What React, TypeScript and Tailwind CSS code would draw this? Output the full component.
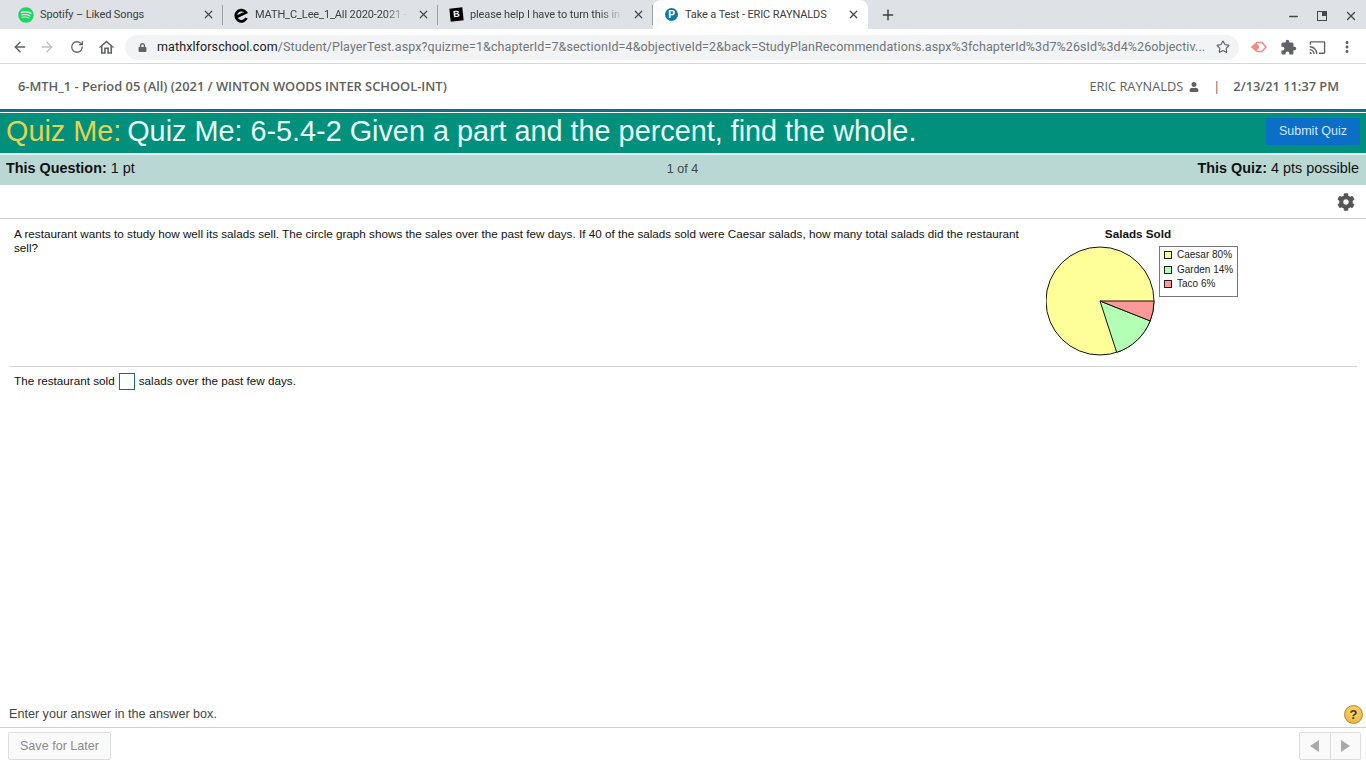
import { ArrowLeft, ArrowRight, Minus, Plus, RotateCw, Star, X } from "lucide-react";
import { FaCog, FaLock, FaSpotify, FaUser } from "react-icons/fa";
import { MdCast, MdExtension, MdMoreVert, MdOutlineHome } from "react-icons/md";

const sans = "font-['Liberation_Sans',Arial,sans-serif]";
const roboto = "font-['Roboto',sans-serif]";
const open = "font-['Open_Sans',sans-serif]";

function Tab({ icon, title, fade }: { icon: React.ReactNode; title: string; fade?: boolean }) {
  return (
    <div className="flex h-[29px] w-[215px] shrink-0 items-center pl-[10px]">
      <div className="flex w-4 h-4 shrink-0 items-center justify-center">{icon}</div>
      <div className={`ml-[6px] flex-1 overflow-hidden whitespace-nowrap pt-[2px] text-[11px] tracking-[-0.12px] text-[#3c4043] ${roboto} ${fade ? "[mask-image:linear-gradient(90deg,black_82%,transparent_97%)]" : ""}`}>
        {title}
      </div>
      <X size={13} strokeWidth={2.2} className="ml-1 text-[#45484c]" />
      <div className="ml-[7px] h-[20px] w-px bg-[#9aa0a6]" />
    </div>
  );
}

function BrowserChrome() {
  return (
    <div className={`shrink-0 ${roboto}`}>
      <div className="flex h-[29px] items-end bg-[#dee1e6] pl-2">
        <Tab icon={<FaSpotify size={16} className="text-[#1ed760]" />} title="Spotify – Liked Songs" />
        <Tab
          icon={
            <svg width="16" height="16" viewBox="0 0 16 16">
              <path d="M3.5 10 L13 5.5 A5.6 5.6 0 1 0 13.5 11" fill="none" stroke="#000" strokeWidth="2.8" />
            </svg>
          }
          title="MATH_C_Lee_1_All 2020-2021 -"
          fade
        />
        <Tab
          icon={<span className={`flex h-[13px] w-[13px] -rotate-6 items-center justify-center bg-black text-[9px] font-bold text-white ${sans}`}>B</span>}
          title="please help I have to turn this in"
          fade
        />
        <div className="flex h-[29px] w-[215px] shrink-0 items-center rounded-t-lg bg-white pl-[12px] pr-[8px]">
          <span className={`flex h-[13px] w-[13px] items-center justify-center rounded-full bg-[#0a7da5] text-[10px] font-bold text-white ${sans}`}>P</span>
          <div className="ml-[7px] flex-1 whitespace-nowrap pt-[2px] text-[11px] tracking-[-0.12px] text-[#3c4043]">Take a Test - ERIC RAYNALDS</div>
          <X size={13} strokeWidth={2.2} className="text-[#45484c]" />
        </div>
        <div className="flex h-[29px] w-[40px] items-center justify-center">
          <Plus size={16} strokeWidth={2.2} className="text-[#3c4043]" />
        </div>
        <div className="ml-auto flex h-[29px] items-center gap-[17px] pr-[8px] pt-[3px] text-[#45484c]">
          <Minus size={13} strokeWidth={2.4} />
          <span className="relative h-[10px] w-[10px] border-[1.5px] border-[#45484c] bg-[#dee1e6] after:absolute after:-right-[1px] after:-top-[1px] after:h-[5px] after:w-[5px] after:bg-[#45484c]" />
          <X size={14} strokeWidth={2.4} />
        </div>
      </div>
      <div className="flex h-[35px] items-center border-b border-[#d6d7da] bg-white pl-[12px] pt-[2px]">
        <ArrowLeft size={16} strokeWidth={2.2} className="text-[#5f6368]" />
        <ArrowRight size={16} strokeWidth={2.2} className="ml-[11px] text-[#bdc1c6]" />
        <RotateCw size={14} strokeWidth={2.2} className="ml-[15px] text-[#5f6368]" />
        <MdOutlineHome size={19} className="ml-[13px] text-[#5f6368]" />
        <div className="ml-[9px] flex h-[25px] w-[1114px] items-center rounded-full bg-[#f1f3f4] pl-[13px]">
          <FaLock size={9} className="text-[#5f6368]" />
          <div className="ml-[10px] w-[1052px] overflow-hidden whitespace-nowrap text-[12.5px] tracking-[0.1px] text-[#70757a]">
            <span className="text-[#202124]">mathxlforschool.com</span>
            /Student/PlayerTest.aspx?quizme=1&amp;chapterId=7&amp;sectionId=4&amp;objectiveId=2&amp;back=StudyPlanRecommendations.aspx%3fchapterId%3d7%26sId%3d4%26objectiv...
          </div>
          <Star size={14} strokeWidth={2} className="ml-[7px] text-[#5f6368]" />
        </div>
        <svg width="16" height="16" viewBox="0 0 16 16" className="ml-[12px]">
          <path d="M1 8 L6 3.5 L11 3.5 L15 8 L11 12.5 L6 12.5 Z" fill="none" stroke="#f28b82" strokeWidth="1.6" />
          <circle cx="5" cy="8" r="3" fill="#f28b82" />
        </svg>
        <MdExtension size={17} className="ml-[13px] text-[#5f6368]" />
        <MdCast size={17} className="ml-[12px] text-[#5f6368]" />
        <MdMoreVert size={18} className="ml-[12px] text-[#5f6368]" />
      </div>
    </div>
  );
}

function PieChart() {
  return (
    <svg width="110" height="110" viewBox="1 0 110 110" className="shrink-0">
      <circle cx="55" cy="55" r="54" fill="#ffff99" stroke="#111" strokeWidth="1" />
      <path d="M55 55 L105.2 74.9 A54 54 0 0 1 71.7 106.4 Z" fill="#b3ffb3" stroke="#111" strokeWidth="1" />
      <path d="M55 55 L109 55 A54 54 0 0 1 105.2 74.9 Z" fill="#ff9999" stroke="#111" strokeWidth="1" />
    </svg>
  );
}

function LegendRow({ color, label }: { color: string; label: string }) {
  return (
    <div className="flex h-[14.5px] items-center gap-[5px]">
      <span className="h-2 w-2 border border-[#222]" style={{ backgroundColor: color }} />
      <span>{label}</span>
    </div>
  );
}

function Chart() {
  return (
    <div className={`w-[192px] shrink-0 ${sans}`}>
      <div className="w-[184px] text-center text-[11.7px] leading-[14px] font-bold text-[#111]">Salads Sold</div>
      <div className="mt-[5px] flex items-start gap-[3px]">
        <PieChart />
        <div className="h-[51px] w-[79px] border border-[#777] pl-[4px] pt-[1px] text-[10px] text-[#222]">
          <LegendRow color="#ffff99" label="Caesar 80%" />
          <LegendRow color="#b3ffb3" label="Garden 14%" />
          <LegendRow color="#ff9999" label="Taco 6%" />
        </div>
      </div>
    </div>
  );
}

export default function App() {
  return (
    <div className="flex h-[768px] w-[1366px] flex-col overflow-hidden bg-white">
      <BrowserChrome />

      <div className={`flex h-[45px] shrink-0 items-center justify-between pl-[18px] pr-[27px] pt-[1px] text-[12.8px] text-[#606060] ${open}`}>
        <div className="text-[12.86px] font-semibold">6-MTH_1 - Period 05 (All) (2021 / WINTON WOODS INTER SCHOOL-INT)</div>
        <div className="flex items-center">
          <span>ERIC RAYNALDS</span>
          <FaUser size={10} className="ml-[6px]" />
          <span className="ml-[14px]">|</span>
          <span className="ml-[13px] font-semibold">2/13/21 11:37 PM</span>
        </div>
      </div>

      <div className={`shrink-0 ${sans}`}>
        <div className="h-[3px] bg-[#10708a]" />
        <div className="flex h-[41px] items-center justify-between border-t border-white bg-[#00907c] pb-[2px] pl-[6px] pr-[6px] text-[28.8px]">
          <div className="whitespace-nowrap">
            <span className="text-[#e5d34e]">Quiz Me:</span>
            <span className="ml-[6px] text-[#e8fbf8]">Quiz Me: 6-5.4-2 Given a part and the percent, find the whole.</span>
          </div>
          <button className="mb-[2px] h-[27px] w-[94px] rounded-[2px] bg-[#0b6fc7] text-[12.5px] text-[#cfe6fb]">Submit Quiz</button>
        </div>
        <div className="grid h-[32px] grid-cols-3 items-center border-t-2 border-[#e4eeec] bg-[#b9d8d4] pb-[2px] pl-[6px] pr-[7px] text-[14.4px] text-[#111]">
          <div>
            <b>This Question:</b> 1 pt
          </div>
          <div className="text-center text-[12.5px] text-[#444]">1 of 4</div>
          <div className="text-right">
            <b>This Quiz:</b> 4 pts possible
          </div>
        </div>
      </div>

      <div className="flex h-[34px] shrink-0 items-center justify-end border-b border-[#cfcfcf] pr-[11px]">
        <FaCog size={18} className="text-[#555]" />
      </div>

      <div className={`flex-1 px-[9px] text-[11.7px] leading-[14px] text-[#111] ${sans}`}>
        <div className="flex h-[148px] border-b border-[#d4d4d4] pl-[5px] pt-[8px]">
          <p className="w-[1010px] shrink-0">
            A restaurant wants to study how well its salads sell. The circle graph shows the sales over the past few days. If 40 of the salads sold were Caesar salads, how many total salads did the restaurant sell?
          </p>
          <div className="ml-[22px]">
            <Chart />
          </div>
        </div>
        <div className="flex items-center pl-[5px] pt-[6px]">
          <span className="pb-[2px]">The restaurant sold</span>
          <span className="mx-[4px] h-[17px] w-4 border border-[#10708a]" />
          <span className="pb-[2px]">salads over the past few days.</span>
        </div>
      </div>

      <div className={`relative flex h-[27px] shrink-0 items-center pl-[9px] pt-[2px] text-[12.6px] text-[#444] ${sans}`}>
        Enter your answer in the answer box.
        <span className="absolute right-[3px] top-[5px] flex h-[19px] w-[19px] items-center justify-center rounded-full border border-[#b98a1c] bg-[radial-gradient(circle_at_50%_35%,#fbdc7c,#e9a92c)] text-[13px] font-bold text-[#4a3510]">
          ?
        </span>
      </div>

      <div className={`flex h-[41px] shrink-0 items-start justify-between border-t border-[#cfcfcf] pl-2 pr-[5px] pt-[4px] ${sans}`}>
        <button className="h-[28px] w-[103px] rounded-[2px] border border-[#ddd] bg-[#fafafa] text-[12.6px] text-[#8a8a8a]">Save for Later</button>
        <div className="flex h-[28px] w-[62px] rounded-[2px] border border-[#ddd] bg-[#fafafa]">
          <div className="flex flex-1 items-center justify-center border-r border-[#ddd]">
            <span className="h-0 w-0 border-y-[6px] border-r-[9px] border-y-transparent border-r-[#a9a9a9]" />
          </div>
          <div className="flex flex-1 items-center justify-center">
            <span className="h-0 w-0 border-y-[6px] border-l-[9px] border-y-transparent border-l-[#a9a9a9]" />
          </div>
        </div>
      </div>
    </div>
  );
}
